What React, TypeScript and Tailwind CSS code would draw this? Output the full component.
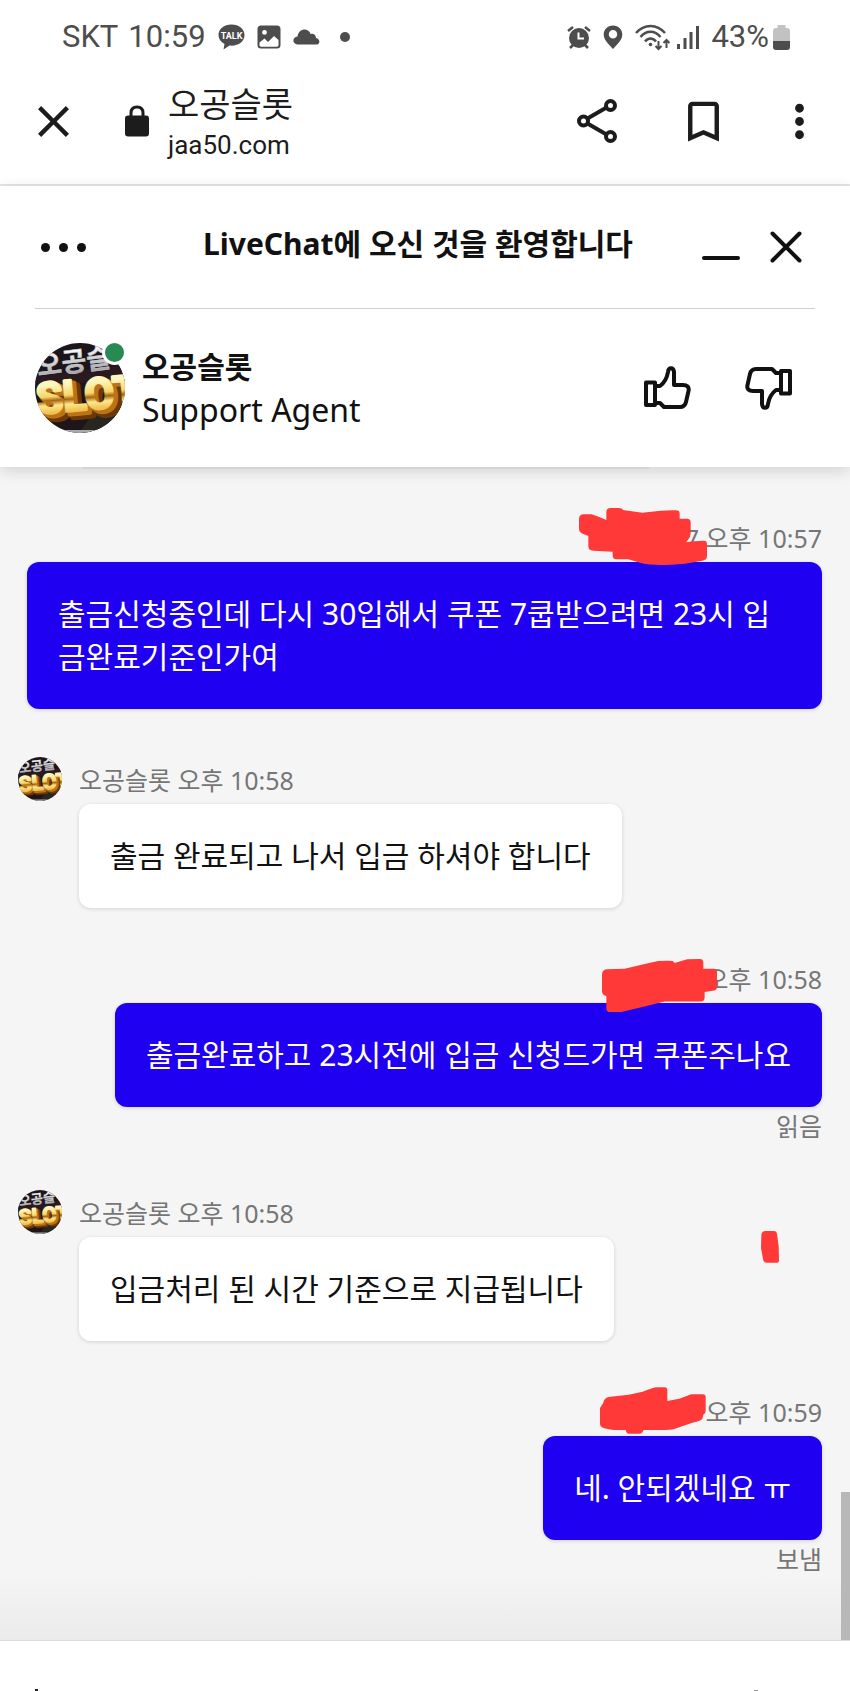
import type { ReactNode } from 'react';
import { MdBookmarkBorder, MdClose, MdMoreVert } from 'react-icons/md';

type Message = {
  id: number;
  from: 'me' | 'agent';
  meta: string;
  text: string;
  status?: string;
  mark?: ReactNode;
};

const Avatar = ({ className }: { className: string }) => (
  <svg viewBox="0 0 90 90" className={className} role="img" aria-label="오공슬롯">
    <defs>
      <linearGradient id="gold" x1="0" y1="0" x2="0" y2="1">
        <stop offset="0.25" stopColor="#fff6bd" />
        <stop offset="0.48" stopColor="#f6d568" />
        <stop offset="0.56" stopColor="#a8630f" />
        <stop offset="0.66" stopColor="#ffe78c" />
        <stop offset="0.8" stopColor="#f0c050" />
      </linearGradient>
      <linearGradient id="silver" x1="0" y1="0" x2="0" y2="1">
        <stop offset="0.2" stopColor="#ffffff" />
        <stop offset="1" stopColor="#8e8e96" />
      </linearGradient>
      <clipPath id="face">
        <circle cx="45" cy="45" r="45" />
      </clipPath>
    </defs>
    <g clipPath="url(#face)">
      <rect width="90" height="90" fill="#1d1519" />
      <path d="M0 34L90 22V40H0Z" fill="#2a1a20" />
      <path d="M44 90L58 70L90 62V90Z" fill="#28261f" />
      <g className="font-['Noto_Sans_CJK_KR',sans-serif] font-bold" fontSize="27">
        <text x="3" y="33" fill="url(#silver)" stroke="#c9c9ce" strokeWidth="0.5" transform="rotate(-7 2 32)">
          오공슬
        </text>
      </g>
      <g
        className="font-['Roboto',sans-serif] font-bold"
        fontSize="43"
        strokeLinejoin="round"
        transform="rotate(-5 2 76)"
      >
        <text x="9" y="77" fill="#5c2c04" stroke="#6b3806" strokeWidth="7">
          SLOT
        </text>
        <text x="6" y="74" fill="#b9741a" stroke="#b9741a" strokeWidth="5">
          SLOT
        </text>
        <text x="3" y="71" fill="url(#gold)" stroke="url(#gold)" strokeWidth="3">
          SLOT
        </text>
      </g>
      <path d="M20 87H72V90H20Z" fill="#a9a9a9" />
    </g>
  </svg>
);

const Thumb = ({ className }: { className: string }) => (
  <svg
    viewBox="0 0 48 48"
    className={className}
    fill="none"
    stroke="#111"
    strokeWidth="4"
    strokeLinejoin="round"
  >
    <path d="M3 18.500h9v22.500H3z" />
    <path d="M12 22h5c4-3 7-8 8-14c.5-5 5.500-5 6 0v13h9c4 0 6.500 2 5.500 6l-2.500 11c-.7 3-2.500 5-6 5H21l-4-4h-5" />
  </svg>
);

const messages: Message[] = [
  {
    id: 1,
    from: 'me',
    meta: '7 오후 10:57',
    text: '출금신청중인데 다시 30입해서 쿠폰 7쿱받으려면 23시 입금완료기준인가여',
    mark: (
      <svg
        viewBox="88 53 390 171"
        className="absolute -top-[7px] right-[113px] w-[130px]"
        fill="#ff3838"
      >
        <path d="M88 86q0-14 14-14h24q18 6 44 17V66q0-13 12-13h26q10 0 12 6l58 8 55-6q30-2 46-1q11 0 11 10v15h22q11 0 11 11v32q0 12-8 20l-6 8 24-3 30-2q9 0 9 10v36q0 12-14 14l-52 9q-90 8-130-1l-40-12h-36q-11 0-11-12v-11l-58-3q-15 0-15-13v-31l-17-7q-11-4-11-14z" />
      </svg>
    ),
  },
  { id: 2, from: 'agent', meta: '오공슬롯 오후 10:58', text: '출금 완료되고 나서 입금 하셔야 합니다' },
  {
    id: 3,
    from: 'me',
    meta: '오후 10:58',
    text: '출금완료하고 23시전에 입금 신청드가면 쿠폰주나요',
    status: '읽음',
    mark: (
      <svg
        viewBox="158 57 344 160"
        className="absolute top-[3px] right-[105px] w-[115px]"
        fill="#ff3838"
      >
        <path d="M158 104q0-14 14-16l54-2 60-14 40-9q34-1 44 0l5 6 38-11 38-1q9 0 10 9v20h31q10 0 10 10v44q0 9-8 11l-29 5v17q0 11-12 11H346l-70 17-62 15h-32q-11 0-11-11v-37q-13-4-13-14z" />
      </svg>
    ),
  },
  {
    id: 4,
    from: 'agent',
    meta: '오공슬롯 오후 10:58',
    text: '입금처리 된 시간 기준으로 지급됩니다',
    mark: (
      <svg
        viewBox="693 33 56 99"
        className="absolute top-[41px] right-[43px] w-[18px]"
        fill="#ff3838"
      >
        <path d="M694 48q0-15 12-15h28q7 0 9 10l5 38 1 43q0 8-8 8h-30q-9 0-11-8l-7-38z" />
      </svg>
    ),
  },
  {
    id: 5,
    from: 'me',
    meta: '오후 10:59',
    text: '네. 안되겠네요 ㅠ',
    status: '보냄',
    mark: (
      <svg
        viewBox="210 501 318 141"
        className="absolute -top-0.5 right-[116px] w-[106px]"
        fill="#ff3838"
      >
        <path d="M220 548q2-14 16-17l60-7 42-9q28-11 40-13h26q8 0 8 9v32l36-7 36-13h34q9 0 9 8v42q0 9-7 11l-3 12q-3 6-30 12l-54 19q-10 3-40 3h-52q-4 11-12 11h-33q-7 0-9-11h-36q-32-4-36-9-5-3-5-10v-47z" />
      </svg>
    ),
  },
];

const StatusBar = () => (
  <div className="flex h-[72px] items-center justify-between pt-0.5 pr-[60px] pl-[62px] font-['Roboto',sans-serif] text-[31px] leading-9 text-[#4d4d4d]">
    <div className="flex items-center">
      <span>SKT</span>
      <span className="ml-2.5">10:59</span>
      <svg viewBox="0 0 27 26" className="ml-3 h-[26px] w-[27px]" fill="currentColor">
        <path d="M13.500 0.500C6 .5.500 5 .5 11c0 4 2.300 7 6 9l-1 5.500 6-4c8 1 15-3.500 15-10.500C26.500 5 21 .5 13.500.5z" />
        <text x="13.500" y="14.500" fontSize="9" fill="#fff" textAnchor="middle" className="font-bold">
          TALK
        </text>
      </svg>
      <svg viewBox="0 0 24 24" className="ml-3 size-6" fill="currentColor">
        <path
          fillRule="evenodd"
          d="M4 .5h16a3.500 3.500 0 0 1 3.500 3.500v16a3.500 3.500 0 0 1-3.500 3.500H4A3.500 3.500 0 0 1 .5 20V4A3.500 3.500 0 0 1 4 .5zM2.500 17.500V20c0 1 .6 1.700 1.700 1.700h15.600c1 0 1.700-.7 1.700-1.700v-5L17 11l-6 6-3.500-3.500zM7.500 5a2.400 2.400 0 1 0 0 4.800 2.400 2.400 0 0 0 0-4.800z"
        />
      </svg>
      <svg viewBox="0 0 27 16" className="ml-3 h-4 w-[27px]" fill="currentColor">
        <path d="M4.500 15.500C-1 15-1 8 4.500 7.500 5.500-1.500 16-1.500 17.500 5c3-1 5.500 1 5.500 4 4.500 1 4.500 6.500 0 6.500z" />
      </svg>
      <span className="ml-5 size-2.5 rounded-full bg-[#4d4d4d]" />
    </div>
    <div className="flex items-center">
      <svg viewBox="0 0 24 24" className="size-6" fill="none" stroke="currentColor" strokeWidth="2.500">
        <circle cx="12" cy="13" r="10" fill="currentColor" stroke="none" />
        <path d="M1 6l5-4M23 6l-5-4M3 23l4-4M21 23l-4-4" />
        <path d="M11.500 7.500v6h5.500" stroke="#fff" strokeWidth="2" />
      </svg>
      <svg viewBox="0 0 20 24" className="ml-3 h-6 w-5" fill="currentColor">
        <path
          fillRule="evenodd"
          d="M10 .5C4.500.5.700 4.500.700 9.500c0 5.500 5 9.500 9.300 14.500 4.300-5 9.300-9 9.300-14.500C19.300 4.500 15.500.5 10 .5zM10 5a4 4 0 1 1 0 8.500A4 4 0 0 1 10 5z"
        />
      </svg>
      <svg viewBox="0 0 36 27" className="ml-3 h-[27px] w-9" fill="none" stroke="currentColor" strokeWidth="2.500">
        <path d="M1 9C9-.5 22-.5 30 9M5.500 13c5.500-7 14.500-7 20 0M10 17.500c3-4 8-4 11 0" />
        <circle cx="15.500" cy="20.500" r="1.800" fill="currentColor" stroke="none" />
        <path d="M23.500 17v8M20.500 22l3 3 3-3M31.500 24v-8M28.500 19l3-3 3 3" strokeWidth="2" />
      </svg>
      <svg viewBox="0 0 22 24" className="ml-1.5 h-6 w-[22px]" stroke="currentColor" strokeWidth="3">
        <path d="M1.500 19v5M8 13v11M14 7v17M20.500 1v23" />
      </svg>
      <span className="ml-3">43%</span>
      <svg viewBox="0 0 17 25" className="ml-1 h-[25px] w-[17px]">
        <path d="M4.500 0h8v3h1.500q3 0 3 3v11H0V6q0-3 3-3h1.500z" fill="#c2c2c2" />
        <path d="M0 16h17v6q0 3-3 3H3q-3 0-3-3z" fill="#4d4d4d" />
      </svg>
    </div>
  </div>
);

const BrowserBar = () => (
  <div className="flex items-center border-b-2 border-[#e5e5e5] pr-6 pb-3.5 pl-[27px] font-['Roboto','Noto_Sans_CJK_KR',sans-serif] text-[#1c1c1c]">
    <button aria-label="닫기">
      <MdClose className="size-[53px]" />
    </button>
    <svg viewBox="0 0 26 32" className="ml-11 h-8 w-[26px]" fill="#1c1c1c">
      <rect x="1" y="10.500" width="24" height="21" rx="3" />
      <path d="M7 12V8q0-6 6-6t6 6v4" fill="none" stroke="#1c1c1c" strokeWidth="3" />
    </svg>
    <div className="ml-[18px] flex-1 pt-2 pb-2.5">
      <h1 className="text-[34px] leading-[50px]">오공슬롯</h1>
      <p className="text-[26px] leading-[30px]">jaa50.com</p>
    </div>
    <div className="flex items-center">
      <button aria-label="공유">
        <svg viewBox="0 0 40 46" className="h-[46px] w-10" fill="none" stroke="#1c1c1c" strokeWidth="4">
          <circle cx="6.500" cy="23" r="4.500" />
          <circle cx="33.500" cy="7.500" r="4.500" />
          <circle cx="33.500" cy="38.500" r="4.500" />
          <path d="M10.500 20.500l19-11M10.500 25.500l19 11" />
        </svg>
      </button>
      <button aria-label="북마크" className="ml-[60px]">
        <MdBookmarkBorder className="size-[53px]" />
      </button>
      <button aria-label="더보기" className="ml-[43px]">
        <MdMoreVert className="size-[53px]" />
      </button>
    </div>
  </div>
);

const ChatHeader = () => (
  <header className="relative z-10 bg-white px-[35px] shadow-[0_4px_14px_rgba(0,0,0,0.14)]">
    <div className="flex h-[123px] items-center justify-between border-b border-[#cfcfcf] pr-3 pl-1.5">
      <button aria-label="메뉴" className="flex gap-[9px]">
        <span className="size-[9px] rounded-full bg-[#111]" />
        <span className="size-[9px] rounded-full bg-[#111]" />
        <span className="size-[9px] rounded-full bg-[#111]" />
      </button>
      <h2 className="pb-2 pl-12 text-[30px] leading-[43px] font-bold">LiveChat에 오신 것을 환영합니다</h2>
      <div className="flex gap-[29px]">
        <button aria-label="최소화">
          <svg viewBox="0 0 38 34" className="h-[34px] w-[38px]" stroke="#111" strokeWidth="4" strokeLinecap="round">
            <path d="M2 28h34" />
          </svg>
        </button>
        <button aria-label="채팅 닫기">
          <svg viewBox="0 0 34 34" className="size-[34px]" stroke="#111" strokeWidth="4" strokeLinecap="round">
            <path d="M3.500 3.500l27 27M30.500 3.500l-27 27" />
          </svg>
        </button>
      </div>
    </div>
    <div className="flex h-[158px] items-center pr-[22px]">
      <div className="relative">
        <Avatar className="size-[90px]" />
        <span className="absolute -top-[3px] -right-0.5 size-[25px] rounded-full border-3 border-white bg-[#278a53]" />
      </div>
      <div className="ml-[17px] flex-1 leading-[43px]">
        <p className="text-[30px] font-bold">오공슬롯</p>
        <p className="text-[32px]">Support Agent</p>
      </div>
      <div className="flex gap-[54px]">
        <button aria-label="좋아요">
          <Thumb className="size-12" />
        </button>
        <button aria-label="싫어요">
          <Thumb className="size-12 rotate-180" />
        </button>
      </div>
    </div>
  </header>
);

const MessageItem = ({ message }: { message: Message }) => {
  const mine = message.from === 'me';

  return (
    <li className="relative flex">
      {!mine && <Avatar className="-ml-[9px] mr-[17px] size-11 shrink-0" />}
      <div className={`flex flex-1 flex-col ${mine ? 'items-end' : 'items-start'}`}>
        <p className="py-0.5 text-[25px] leading-[43px] text-[#767676]">{message.meta}</p>
        <p
          className={`rounded-xl px-[31px] pt-[30px] pb-[31px] text-[30px] leading-[43px] break-all shadow-[0_1px_4px_rgba(0,0,0,0.14)] ${
            mine ? 'bg-[#2000f0] text-white' : 'bg-white text-[#111]'
          }`}
        >
          {message.text}
        </p>
        {message.status && (
          <p className="pt-1 text-[25px] leading-[31px] text-[#767676]">{message.status}</p>
        )}
      </div>
      {message.mark}
    </li>
  );
};

export default function App() {
  return (
    <div className="flex h-screen flex-col overflow-hidden bg-white font-['Noto_Sans','Noto_Sans_CJK_KR',sans-serif] text-[#111]">
      <StatusBar />
      <BrowserBar />
      <ChatHeader />
      <main className="relative shrink-0 bg-[#f5f5f5]">
        <div className="mr-[200px] ml-[82px] h-0.5 rounded-b-xl bg-[#e9e9e9]" />
        <ul className="flex flex-col gap-12 pt-[46px] pr-7 pl-[27px]">
          {messages.map((message) => (
            <MessageItem key={message.id} message={message} />
          ))}
        </ul>
        <div className="h-[65px] bg-linear-to-b from-[#f5f5f5] to-[#ebebeb]" />
        <div className="absolute right-0 bottom-0 h-[148px] w-[9px] bg-[#b8b8b8]" />
      </main>
      <footer className="flex flex-1 items-end justify-between border-t border-[#dcdcdc] pr-[92px] pl-[35px]">
        <span className="h-0.5 w-[3px] bg-[#222]" />
        <span className="h-px w-1 bg-[#999]" />
      </footer>
    </div>
  );
}
